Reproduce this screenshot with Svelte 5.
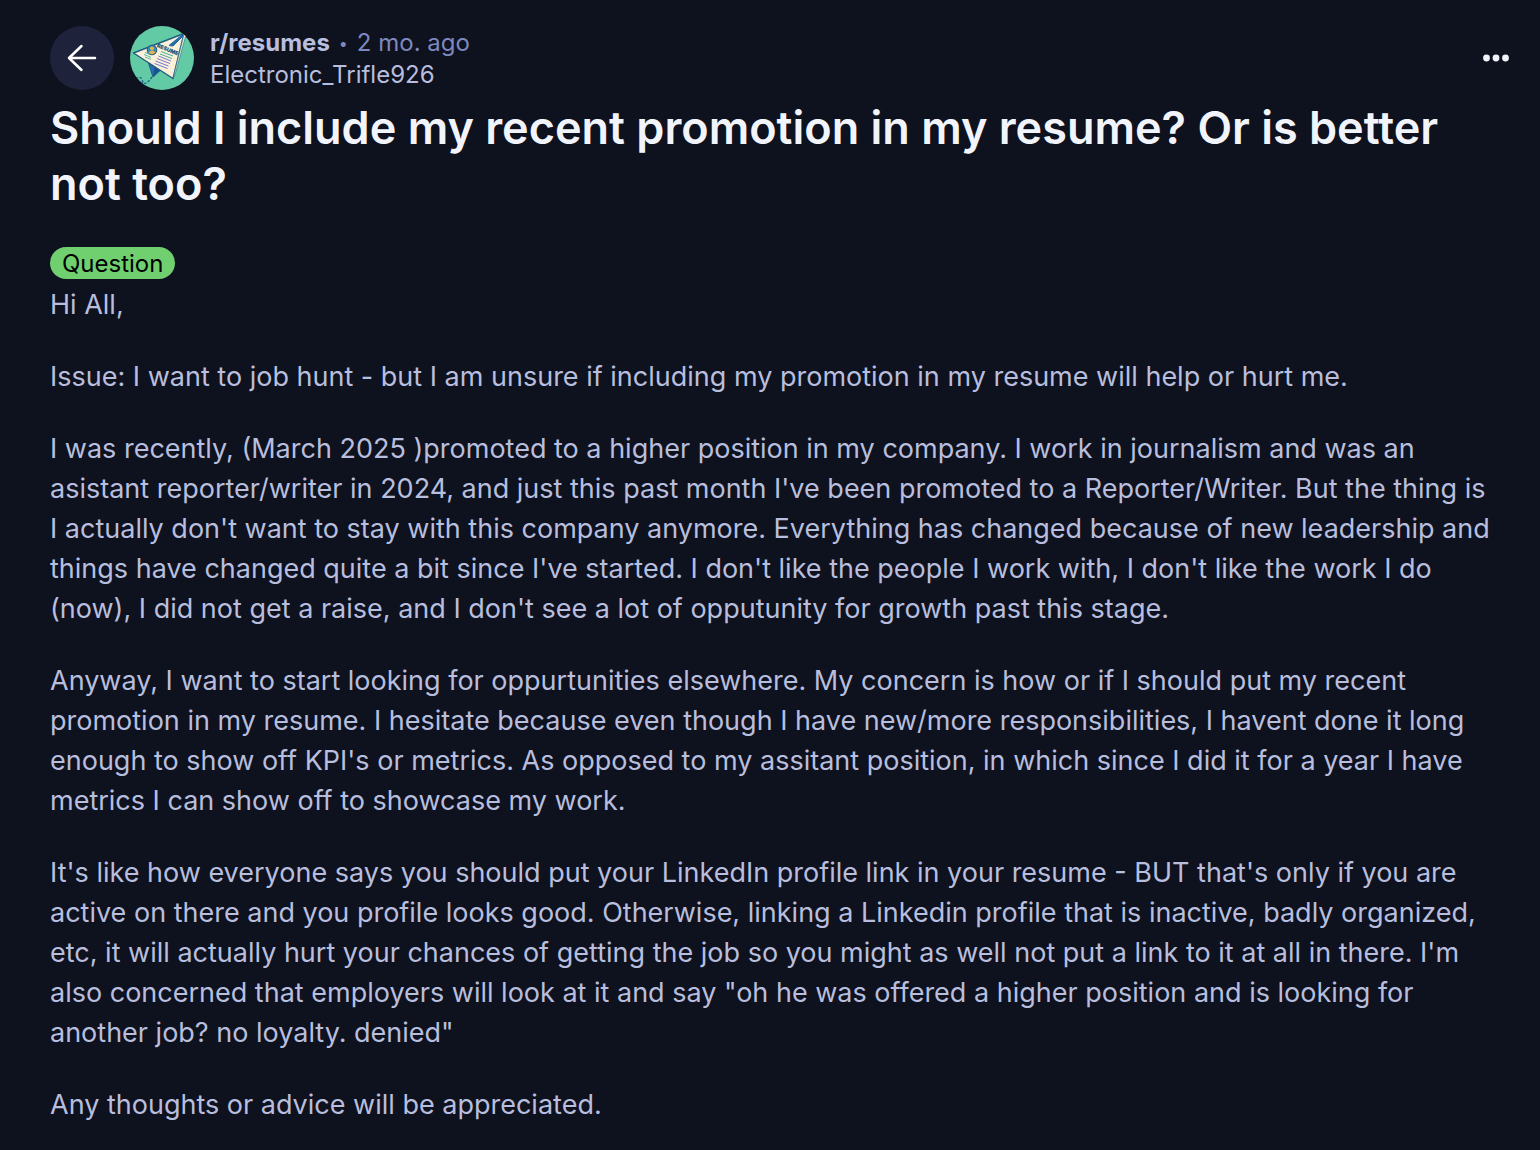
<script>
  const paragraphs = [
    'Hi All,',
    'Issue: I want to job hunt - but I am unsure if including my promotion in my resume will help or hurt me.',
    "I was recently, (March 2025 )promoted to a higher position in my company. I work in journalism and was an asistant reporter/writer in 2024, and just this past month I've been promoted to a Reporter/Writer. But the thing is I actually don't want to stay with this company anymore. Everything has changed because of new leadership and things have changed quite a bit since I've started. I don't like the people I work with, I don't like the work I do (now), I did not get a raise, and I don't see a lot of opputunity for growth past this stage.",
    "Anyway, I want to start looking for oppurtunities elsewhere. My concern is how or if I should put my recent promotion in my resume. I hesitate because even though I have new/more responsibilities, I havent done it long enough to show off KPI's or metrics. As opposed to my assitant position, in which since I did it for a year I have metrics I can show off to showcase my work.",
    "It's like how everyone says you should put your LinkedIn profile link in your resume - BUT that's only if you are active on there and you profile looks good. Otherwise, linking a Linkedin profile that is inactive, badly organized, etc, it will actually hurt your chances of getting the job so you might as well not put a link to it at all in there. I'm also concerned that employers will look at it and say \"oh he was offered a higher position and is looking for another job? no loyalty. denied\"",
    'Any thoughts or advice will be appreciated.',
  ];
</script>

<main class="post">
  <header class="credit">
    <button class="back" type="button" aria-label="Back">
      <svg viewBox="0 0 64 64" aria-hidden="true">
        <path d="M45 32H19M31.500 20L19 32L31.500 44" />
      </svg>
    </button>
    <a class="avatar" href="#community" aria-label="r/resumes">
      <svg viewBox="0 0 64 64" aria-hidden="true">
        <defs>
          <clipPath id="round"><circle cx="32" cy="32" r="32" /></clipPath>
        </defs>
        <g clip-path="url(#round)">
          <rect width="64" height="64" fill="#62cba6" />
          <path d="M18.500 37L23 51L30 44.500Z" fill="#286db0" stroke="#235a8c" />
          <path d="M23 51L24.500 41.500L30 44.500Z" fill="#17558f" />
          <path d="M3.500 27L54 7.500L43 52.500Z" fill="#faf1d8" stroke="#235c80" stroke-width="1.400" stroke-linejoin="round" />
          <path d="M52 9L39 19.500L43 20L54 9Z" fill="#1e70b7" stroke="#22649c" />
          <path d="M54 8L43 52.500L45.500 47L56 9Z" fill="#e3e8cc" stroke="#2a6f8c" stroke-width=".6" />
          <circle cx="22" cy="24" r="4.800" fill="#348fbb" stroke="#1d5779" />
          <circle cx="22" cy="22.300" r="1.900" fill="#e7b34b" />
          <path d="M18.500 26.700Q22 22.500 25.500 26.500L22 28.400Z" fill="#e7b34b" />
          <text x="26.500" y="21" transform="rotate(22 26.500 21)">RESUME</text>
          <g fill="none" stroke-width="1">
            <path d="M31 25.500L43 30M30 28L42 32.500" stroke="#41ae9f" />
            <path d="M28.500 30L41 35M27 32.500L40 37.500M25.500 35L38.500 40M24.500 37.500L37.500 42.500" stroke="#7777d4" />
            <path d="M15 26.500L20 28.500M14 28.500L21 31.300M15 31L21 33.300" stroke="#58baa4" />
          </g>
          <path d="M22 51C18 57 13 60 12.500 55C12 50 5 50 8 55L13 60" fill="none" stroke="#20658f" stroke-width="1.400" stroke-dasharray="2.400 1.600" />
        </g>
      </svg>
    </a>
    <div class="names">
      <div class="line">
        <a class="community" href="#community">r/resumes</a>
        <span class="dot">•</span>
        <time>2 mo. ago</time>
      </div>
      <a class="author" href="#author">Electronic_Trifle926</a>
    </div>
    <button class="more" type="button" aria-label="More options">
      <svg viewBox="0 0 32 32" aria-hidden="true">
        <circle cx="6.500" cy="16" r="3.400" /><circle cx="16" cy="16" r="3.400" /><circle cx="25.500" cy="16" r="3.400" />
      </svg>
    </button>
  </header>

  <h1>Should I include my recent promotion in my resume? Or is better not too?</h1>
  <a class="flair" href="#question">Question</a>

  <div class="body">
    {#each paragraphs as text}
      <p>{text}</p>
    {/each}
  </div>
</main>

<style>
  :global(body) {
    margin: 0;
    background: #0e111e;
  }
  .post {
    padding: 26px 28px 24px 50px;
    font-family: Inter, 'Liberation Sans', sans-serif;
    color: #b8bedd;
  }
  a {
    color: inherit;
    text-decoration: none;
  }
  button {
    padding: 0;
    border: 0;
    background: none;
    cursor: pointer;
  }
  svg {
    display: block;
    width: 100%;
    height: 100%;
  }
  .credit {
    display: flex;
    align-items: center;
    gap: 16px;
    height: 64px;
  }
  .back,
  .avatar {
    flex: none;
    width: 64px;
    height: 64px;
    border-radius: 50%;
  }
  .back {
    background: #1e233b;
  }
  .back path {
    fill: none;
    stroke: #ffffff;
    stroke-width: 2.5;
    stroke-linecap: round;
    stroke-linejoin: round;
  }
  .avatar text {
    font-size: 5.4px;
    font-weight: 900;
    fill: #235173;
  }
  .names {
    flex: 1;
    padding-top: 2px;
    font-size: 24px;
    line-height: 32px;
  }
  .line {
    display: flex;
    align-items: center;
    gap: 9px;
  }
  .community {
    font-weight: 700;
  }
  .dot {
    font-size: 16px;
  }
  .dot,
  time {
    color: #7d88bf;
  }
  .more {
    width: 32px;
    height: 32px;
  }
  .more circle {
    fill: #f3f4fb;
  }
  h1 {
    margin: 10px 0 35px;
    font-size: 45px;
    font-weight: 600;
    line-height: 56px;
    color: #f2f4fb;
  }
  .flair {
    display: block;
    width: fit-content;
    padding: 1px 12px 0;
    border-radius: 16px;
    background: #70d070;
    color: #000000;
    font-size: 24px;
    line-height: 31px;
  }
  .body {
    display: grid;
    gap: 32px;
    margin-top: 6px;
    padding-right: 14px;
    font-size: 27px;
    line-height: 40px;
  }
  p {
    margin: 0;
  }
</style>
